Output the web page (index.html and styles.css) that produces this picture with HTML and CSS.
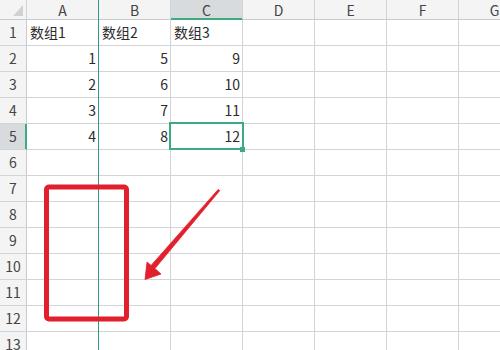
FILE: index.html
```html
<!DOCTYPE html>
<html lang="zh">
<head>
<meta charset="utf-8">
<link rel="stylesheet" href="styles.css">
</head>
<body>
<div class="screen">
  <div class="sheet">
    <div class="c h corner"><span class="tri"></span></div>
    <div class="c h">A</div><div class="c h">B</div><div class="c h hsel">C</div><div class="c h">D</div><div class="c h">E</div><div class="c h">F</div><div class="c h">G</div>

    <div class="c r">1</div><div class="c t">数组1</div><div class="c t">数组2</div><div class="c t">数组3</div><div class="c"></div><div class="c"></div><div class="c"></div><div class="c"></div>
    <div class="c r">2</div><div class="c n">1</div><div class="c n">5</div><div class="c n">9</div><div class="c"></div><div class="c"></div><div class="c"></div><div class="c"></div>
    <div class="c r">3</div><div class="c n">2</div><div class="c n">6</div><div class="c n">10</div><div class="c"></div><div class="c"></div><div class="c"></div><div class="c"></div>
    <div class="c r">4</div><div class="c n">3</div><div class="c n">7</div><div class="c n">11</div><div class="c"></div><div class="c"></div><div class="c"></div><div class="c"></div>
    <div class="c r rsel">5</div><div class="c n">4</div><div class="c n">8</div><div class="c n">12</div><div class="c"></div><div class="c"></div><div class="c"></div><div class="c"></div>
    <div class="c r">6</div><div class="c"></div><div class="c"></div><div class="c"></div><div class="c"></div><div class="c"></div><div class="c"></div><div class="c"></div>
    <div class="c r">7</div><div class="c"></div><div class="c"></div><div class="c"></div><div class="c"></div><div class="c"></div><div class="c"></div><div class="c"></div>
    <div class="c r">8</div><div class="c"></div><div class="c"></div><div class="c"></div><div class="c"></div><div class="c"></div><div class="c"></div><div class="c"></div>
    <div class="c r">9</div><div class="c"></div><div class="c"></div><div class="c"></div><div class="c"></div><div class="c"></div><div class="c"></div><div class="c"></div>
    <div class="c r">10</div><div class="c"></div><div class="c"></div><div class="c"></div><div class="c"></div><div class="c"></div><div class="c"></div><div class="c"></div>
    <div class="c r">11</div><div class="c"></div><div class="c"></div><div class="c"></div><div class="c"></div><div class="c"></div><div class="c"></div><div class="c"></div>
    <div class="c r">12</div><div class="c"></div><div class="c"></div><div class="c"></div><div class="c"></div><div class="c"></div><div class="c"></div><div class="c"></div>
    <div class="c r">13</div><div class="c"></div><div class="c"></div><div class="c"></div><div class="c"></div><div class="c"></div><div class="c"></div><div class="c"></div>
  </div>

  <div class="freeze"></div>
  <div class="selection"></div>
  <div class="handle"></div>

  <svg class="annot" width="500" height="350" viewBox="0 0 500 350">
    <rect x="46.5" y="187" width="80" height="132" rx="2.5" ry="2.5" fill="none" stroke="#e21f2c" stroke-width="5"/>
    <polygon points="218.2,189.4 219.8,190.6 154.9,268.6 161,274 145,279.5 147,262 151.1,265.4" fill="#e21f2c" stroke="#e21f2c" stroke-width="0.8" stroke-linejoin="round"/>
  </svg>
</div>
</body>
</html>
```

FILE: styles.css
```css
* {
  box-sizing: border-box;
}

html, body {
  margin: 0;
  padding: 0;
  background: #ffffff;
}

.screen {
  position: relative;
  width: 500px;
  height: 350px;
  overflow: hidden;
  font-family: "Noto Sans CJK SC", "Noto Sans", sans-serif;
  font-size: 14px;
  color: #2b2b2b;
}

.sheet {
  display: grid;
  grid-template-columns: 27px repeat(7, 72px);
  grid-template-rows: 20px;
  grid-auto-rows: 26px;
  width: 531px;
}

.c {
  border-right: 1px solid #d2d4d6;
  border-bottom: 1px solid #d2d4d6;
  line-height: 25px;
  white-space: nowrap;
  overflow: hidden;
}

.h {
  background: #f4f4f4;
  color: #444;
  text-align: center;
  line-height: 20px;
  font-size: 14px;
  border-bottom-color: #c9cbcd;
}

.corner {
  position: relative;
}

.tri {
  position: absolute;
  left: 13px;
  top: 5px;
  width: 0;
  height: 0;
  border-left: 10px solid transparent;
  border-bottom: 11px solid #cfd1d3;
}

.hsel {
  background: #d8dbde;
  border-bottom-color: #3dab80;
  box-shadow: inset 0 -1px 0 #3dab80;
}

.r {
  background: #f4f4f4;
  color: #444;
  text-align: center;
  border-right-color: #c9cbcd;
}

.rsel {
  background: #d8dbde;
  border-right-color: #3dab80;
  box-shadow: inset -1px 0 0 #3dab80;
}

.t {
  padding-left: 3px;
}

.n {
  text-align: right;
  padding-right: 2px;
}

.freeze {
  position: absolute;
  left: 98px;
  top: 0;
  width: 1px;
  height: 350px;
  background: #2f9a86;
}

.selection {
  position: absolute;
  left: 169px;
  top: 122px;
  width: 75px;
  height: 28px;
  border: 2px solid #3dab80;
}

.handle {
  position: absolute;
  left: 240px;
  top: 147px;
  width: 5px;
  height: 5px;
  background: #3dab80;
}

.annot {
  position: absolute;
  left: 0;
  top: 0;
  pointer-events: none;
}
```
